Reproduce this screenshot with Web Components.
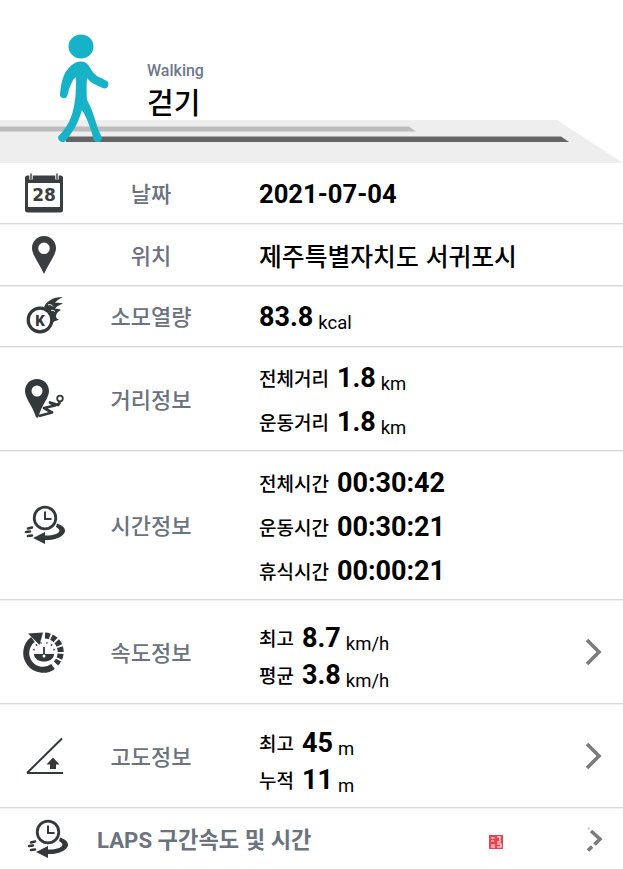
<!DOCTYPE html>
<html lang="ko">
<head>
<meta charset="utf-8">
<title>걷기</title>
<style>
  html, body { margin: 0; background: #fff; }
  body { font-family: Roboto, "Noto Sans CJK KR", sans-serif; width: 623px; overflow: hidden; }
</style>
</head>
<body>
<walk-banner sub="Walking" title="걷기"></walk-banner>

<info-row h="60" icon="calendar" label="날짜" drop="2">
  <big-value>2021-07-04</big-value>
</info-row>
<info-row h="61" icon="pin" label="위치" drop="0">
  <big-value cjk>제주특별자치도 서귀포시</big-value>
</info-row>
<info-row h="60" icon="fire" label="소모열량" drop="7">
  <big-value big unit="kcal">83.8</big-value>
</info-row>
<info-row h="103" icon="route" label="거리정보" gap="44" drop="8">
  <stat-line name="전체거리" value="1.8" unit="km"></stat-line>
  <stat-line name="운동거리" value="1.8" unit="km"></stat-line>
</info-row>
<info-row h="148" icon="clock" label="시간정보" gap="44" drop="8">
  <stat-line name="전체시간" value="00:30:42"></stat-line>
  <stat-line name="운동시간" value="00:30:21"></stat-line>
  <stat-line name="휴식시간" value="00:00:21"></stat-line>
</info-row>
<info-row h="103" icon="speed" label="속도정보" gap="37" drop="16" more>
  <stat-line name="최고" value="8.7" unit="km/h"></stat-line>
  <stat-line name="평균" value="3.8" unit="km/h"></stat-line>
</info-row>
<info-row h="103" icon="slope" label="고도정보" gap="37" drop="17" more>
  <stat-line name="최고" value="45" unit="m"></stat-line>
  <stat-line name="누적" value="11" unit="m"></stat-line>
</info-row>
<laps-row label="LAPS 구간속도 및 시간"></laps-row>

<script>
// icon artwork, 50x44 box, shared by the rows
const ICONS = {
  calendar: `
    <rect x="6" y="4.500" width="38" height="37" rx="2.500" fill="#3b3e41"/>
    <rect x="9" y="12" width="32" height="24" fill="#fff"/>
    <path d="M12 2.500v6M38 2.500v6" stroke="#fff" stroke-width="3.400"/>
    <path d="M12 3v5M38 3v5" stroke="#3b3e41" stroke-width="1.400" stroke-linecap="round"/>
    <text x="25" y="30" text-anchor="middle" font-family="DejaVu Sans, sans-serif" font-weight="700" font-size="17" fill="#3b3e41">28</text>`,
  pin: `
    <path fill-rule="evenodd" fill="#3b3e41" d="M25 3C17.800 3 13 8.700 13 15C13 22 20 30 25 41C30 30 37 22 37 15C37 8.700 32.200 3 25 3ZM25 9.500A5.800 5.800 0 1 1 25 21.100A5.800 5.800 0 1 1 25 9.500Z"/>`,
  fire: `
    <circle cx="21" cy="26" r="11.800" fill="none" stroke="#33383b" stroke-width="3.200"/>
    <text x="21" y="31.500" text-anchor="middle" font-family="Roboto, sans-serif" font-weight="900" font-size="15" fill="#33383b">K</text>
    <path fill="#33383b" d="M25 13C27 8 33 3 44 3C40 5 37 7 36 9C38 8.500 41 8.500 44 9.500C40 11 37 12.500 36 15C38 14.500 40 15 42 16C39 17.500 37.500 19 37 22C37 24 38 25 40 25.500C37 27 35 27 33.500 29C33 22 30 16 25 13Z"/>
    <path d="M29 11C31 10 33 11 34 12.500M32 16.500C33 16 35 16.500 36 17.500" fill="none" stroke="#fff" stroke-width="1"/>`,
  route: `
    <path fill-rule="evenodd" fill="#33383b" d="M18 2C11 2 6 7.500 6 14C6 21 13 28 17 40C18 41 19 41 19.500 40C22 29 30 21 30 14C30 7.500 25 2 18 2ZM18 8.500A5.500 5.500 0 1 1 18 19.500A5.500 5.500 0 1 1 18 8.500Z"/>
    <path fill="none" stroke="#33383b" stroke-width="2.800" stroke-linejoin="round" d="M20 39L33 35.500L25 31L36 28.500L31 25.500L39 28L41 25"/>
    <circle cx="41" cy="21.500" r="2.800" fill="none" stroke="#33383b" stroke-width="1.800"/>`,
  clock: `
    <circle cx="26" cy="15" r="10.800" fill="none" stroke="#33383b" stroke-width="2.800"/>
    <path d="M26 8.500v7.500h6.500" fill="none" stroke="#33383b" stroke-width="2"/>
    <path fill="#33383b" d="M38 20.500C43 22 46.500 25 46 28.500C44.500 34 35 37.500 26 37L26 41L14 35L26 29L26 32.500C33 32.800 39.500 31 40.500 28C40.500 26 38.500 25 37 24Z"/>
    <path d="M9 25.500l4-1M7 29l4-.5M9 33l4-.5" stroke="#33383b" stroke-width="2.600" stroke-linecap="round"/>`,
  speed: `
    <path fill="none" stroke="#33383b" stroke-width="6" d="M34 36.500A16.500 16.500 0 0 1 14 9.500"/>
    <path fill="#33383b" d="M9 3.500L24 2.500L20.500 15Z"/>
    <path fill="none" stroke="#33383b" stroke-width="6" stroke-dasharray="4.900 1.800" d="M26 5.500A16.500 16.500 0 0 1 37 33.500"/>
    <path fill="#33383b" d="M15 24H35C35 29 30 31.500 25 31.500C20 31.500 15 29 15 24Z"/>
    <path d="M25 24V17" stroke="#33383b" stroke-width="1.800"/>
    <path d="M14.500 20L15.500 19.300M17 15.500L18 14.500M21.500 13L22.500 12.800M27.500 12.800L28.500 13M32 14.500L33 15.500M34.500 19.300L35.500 20" stroke="#33383b" stroke-width="1.800"/>
    <circle cx="25" cy="26" r="1.500" fill="#fff"/>`,
  slope: `
    <path d="M8 39L43 4.500M8 39H44" fill="none" stroke="#33383b" stroke-width="2"/>
    <path fill="#33383b" d="M34 23.500L27.500 30.500H31V35H37V30.500H40.500Z"/>`
};

class RowIcon extends HTMLElement {
  connectedCallback() {
    this.attachShadow({ mode: 'open' });
    this.shadowRoot.innerHTML = `
      <style>
        :host { display: block; width: 50px; height: 44px; }
        svg { display: block; }
      </style>
      <svg width="50" height="44" viewBox="0 0 50 44">${ICONS[this.getAttribute('name')]}</svg>`;
  }
}
customElements.define('row-icon', RowIcon);

class WalkBanner extends HTMLElement {
  connectedCallback() {
    this.attachShadow({ mode: 'open' });
    this.shadowRoot.innerHTML = `
      <style>
        :host { display: block; position: relative; height: 163px; background: #fff; }
        .scene { position: absolute; left: 0; top: 0; }
        .text { position: relative; padding: 62px 0 0 147px; }
        .sub { font: 500 16px/18px Roboto, sans-serif; color: #70778a; }
        .title { font: 500 29px/40px "Noto Sans CJK KR", sans-serif; color: #000; margin-top: 1px; }
      </style>
      <svg class="scene" width="623" height="163" viewBox="0 0 623 163">
        <path d="M0 120H557L623 163H0Z" fill="#eee"/>
        <path d="M0 126.500H409L416 131.500H0Z" fill="#bcbcbc"/>
        <path d="M66 136.500H561L569 142H66Z" fill="#656565"/>
        <path fill="#18b2c8" d="M80 61.500C84 61 87 63 89 66C92 71 94 74 97 76L106 80.500A4.200 4.200 0 0 1 104 88.500L96 85C92 83 89 81 87 78C86.500 85 86.500 93 87 100C92 108 95 120 98.500 130L102 138A4.500 4.500 0 0 1 93.500 139.500C92 132 88 120 82 110C79 120 76 127 70 135L65 141.500A4.500 4.500 0 0 1 58.500 136C66 129 73 118 75 100C76 92 76 84 76 77C72 80 70 86 67.500 95A3.700 3.700 0 0 1 60 93.500C61 84 63 74 68 69C71 65 75 62 80 61.500Z"/>
        <ellipse cx="81" cy="46.500" rx="12.500" ry="12" fill="#18b2c8"/>
      </svg>
      <div class="text">
        <div class="sub">${this.getAttribute('sub')}</div>
        <div class="title">${this.getAttribute('title')}</div>
      </div>`;
  }
}
customElements.define('walk-banner', WalkBanner);

class InfoRow extends HTMLElement {
  connectedCallback() {
    const more = this.hasAttribute('more');
    this.attachShadow({ mode: 'open' });
    this.shadowRoot.innerHTML = `
      <style>
        :host {
          display: grid;
          grid-template-columns: 88px 126px 1fr 60px;
          align-items: center;
          height: ${this.getAttribute('h')}px;
          border-bottom: 1px solid #d8d8d8;
          box-shadow: 0 1px 0 #f1f1f1;
          box-sizing: content-box;
        }
        .icon { display: flex; justify-content: center; }
        .label {
          text-align: center;
          padding-bottom: 2px;
          font: 500 22px/30px "Noto Sans CJK KR", sans-serif;
          color: #6b7280;
        }
        .value {
          padding: ${this.getAttribute('drop') || 6}px 0 0 45px;
          display: grid;
          grid-auto-rows: ${this.getAttribute('gap') || 40}px;
          align-items: center;
        }
        .more { display: flex; justify-content: center; }
      </style>
      <div class="icon"><row-icon name="${this.getAttribute('icon')}"></row-icon></div>
      <div class="label">${this.getAttribute('label')}</div>
      <div class="value"><slot></slot></div>
      <div class="more">${more ? `
        <svg width="18" height="28" viewBox="0 0 18 28">
          <path d="M3 2L15 14L3 26" fill="none" stroke="#7b7b7b" stroke-width="3.600"/>
        </svg>` : ''}</div>`;
  }
}
customElements.define('info-row', InfoRow);

class BigValue extends HTMLElement {
  connectedCallback() {
    const unit = this.getAttribute('unit');
    this.attachShadow({ mode: 'open' });
    this.shadowRoot.innerHTML = `
      <style>
        :host { display: block; color: #000; white-space: nowrap; }
        .v { font: 700 25.600px/30px Roboto, "Noto Sans CJK KR", sans-serif; }
        :host([big]) .v { font-size: 27px; }
        :host([cjk]) .v { font: 500 24.800px/30px "Noto Sans CJK KR", sans-serif; }
        .u { font: 400 18.500px/30px Roboto, sans-serif; margin-left: 5px; vertical-align: -3px; }
      </style>
      <span class="v"><slot></slot></span>${unit ? `<span class="u">${unit}</span>` : ''}`;
  }
}
customElements.define('big-value', BigValue);

class StatLine extends HTMLElement {
  connectedCallback() {
    const unit = this.getAttribute('unit');
    this.attachShadow({ mode: 'open' });
    this.shadowRoot.innerHTML = `
      <style>
        :host { display: block; color: #000; white-space: nowrap; line-height: 30px; }
        .n { font: 500 19px/30px "Noto Sans CJK KR", sans-serif; margin-right: 8px; vertical-align: 1px; }
        .v { font: 700 27px/30px Roboto, sans-serif; }
        .u { font: 400 18.500px/30px Roboto, sans-serif; margin-left: 5px; vertical-align: -3px; }
      </style>
      <span class="n">${this.getAttribute('name')}</span><span class="v">${this.getAttribute('value')}</span>${unit ? `<span class="u">${unit}</span>` : ''}`;
  }
}
customElements.define('stat-line', StatLine);

class LapsRow extends HTMLElement {
  connectedCallback() {
    this.attachShadow({ mode: 'open' });
    this.shadowRoot.innerHTML = `
      <style>
        :host {
          display: flex;
          align-items: center;
          height: 61px;
          border-bottom: 1px solid #d8d8d8;
        }
        row-icon { margin-left: 22px; }
        .label {
          margin-left: 25px;
          padding-top: 2px;
          flex: 1;
          font: 700 22.200px/30px Roboto, "Noto Sans CJK KR", sans-serif;
          color: #6b7280;
        }
        .stamp { display: block; margin: 6px 82px 0 0; }
        .more { display: block; margin-right: 20px; }
      </style>
      <row-icon name="clock"></row-icon>
      <div class="label">${this.getAttribute('label')}</div>
      <svg class="stamp" width="14" height="14" viewBox="0 0 14 14">
        <rect width="14" height="14" fill="#f0404a"/>
        <path d="M2 3H6M2 6H5M2 10H6M2 12H6M8 2H12M11 2V7H8M8 9H12V12H8" fill="none" stroke="#fff" stroke-width="1.200"/>
      </svg>
      <svg class="more" width="18" height="28" viewBox="0 0 18 28">
        <path d="M6 6L15 14L9.500 19.500M7 21.500L3 25.500" fill="none" stroke="#7b7b7b" stroke-width="3.600"/>
        <path d="M3 2.500L4.500 4" fill="none" stroke="#c8c8c8" stroke-width="2"/>
      </svg>`;
  }
}
customElements.define('laps-row', LapsRow);
</script>
</body>
</html>
